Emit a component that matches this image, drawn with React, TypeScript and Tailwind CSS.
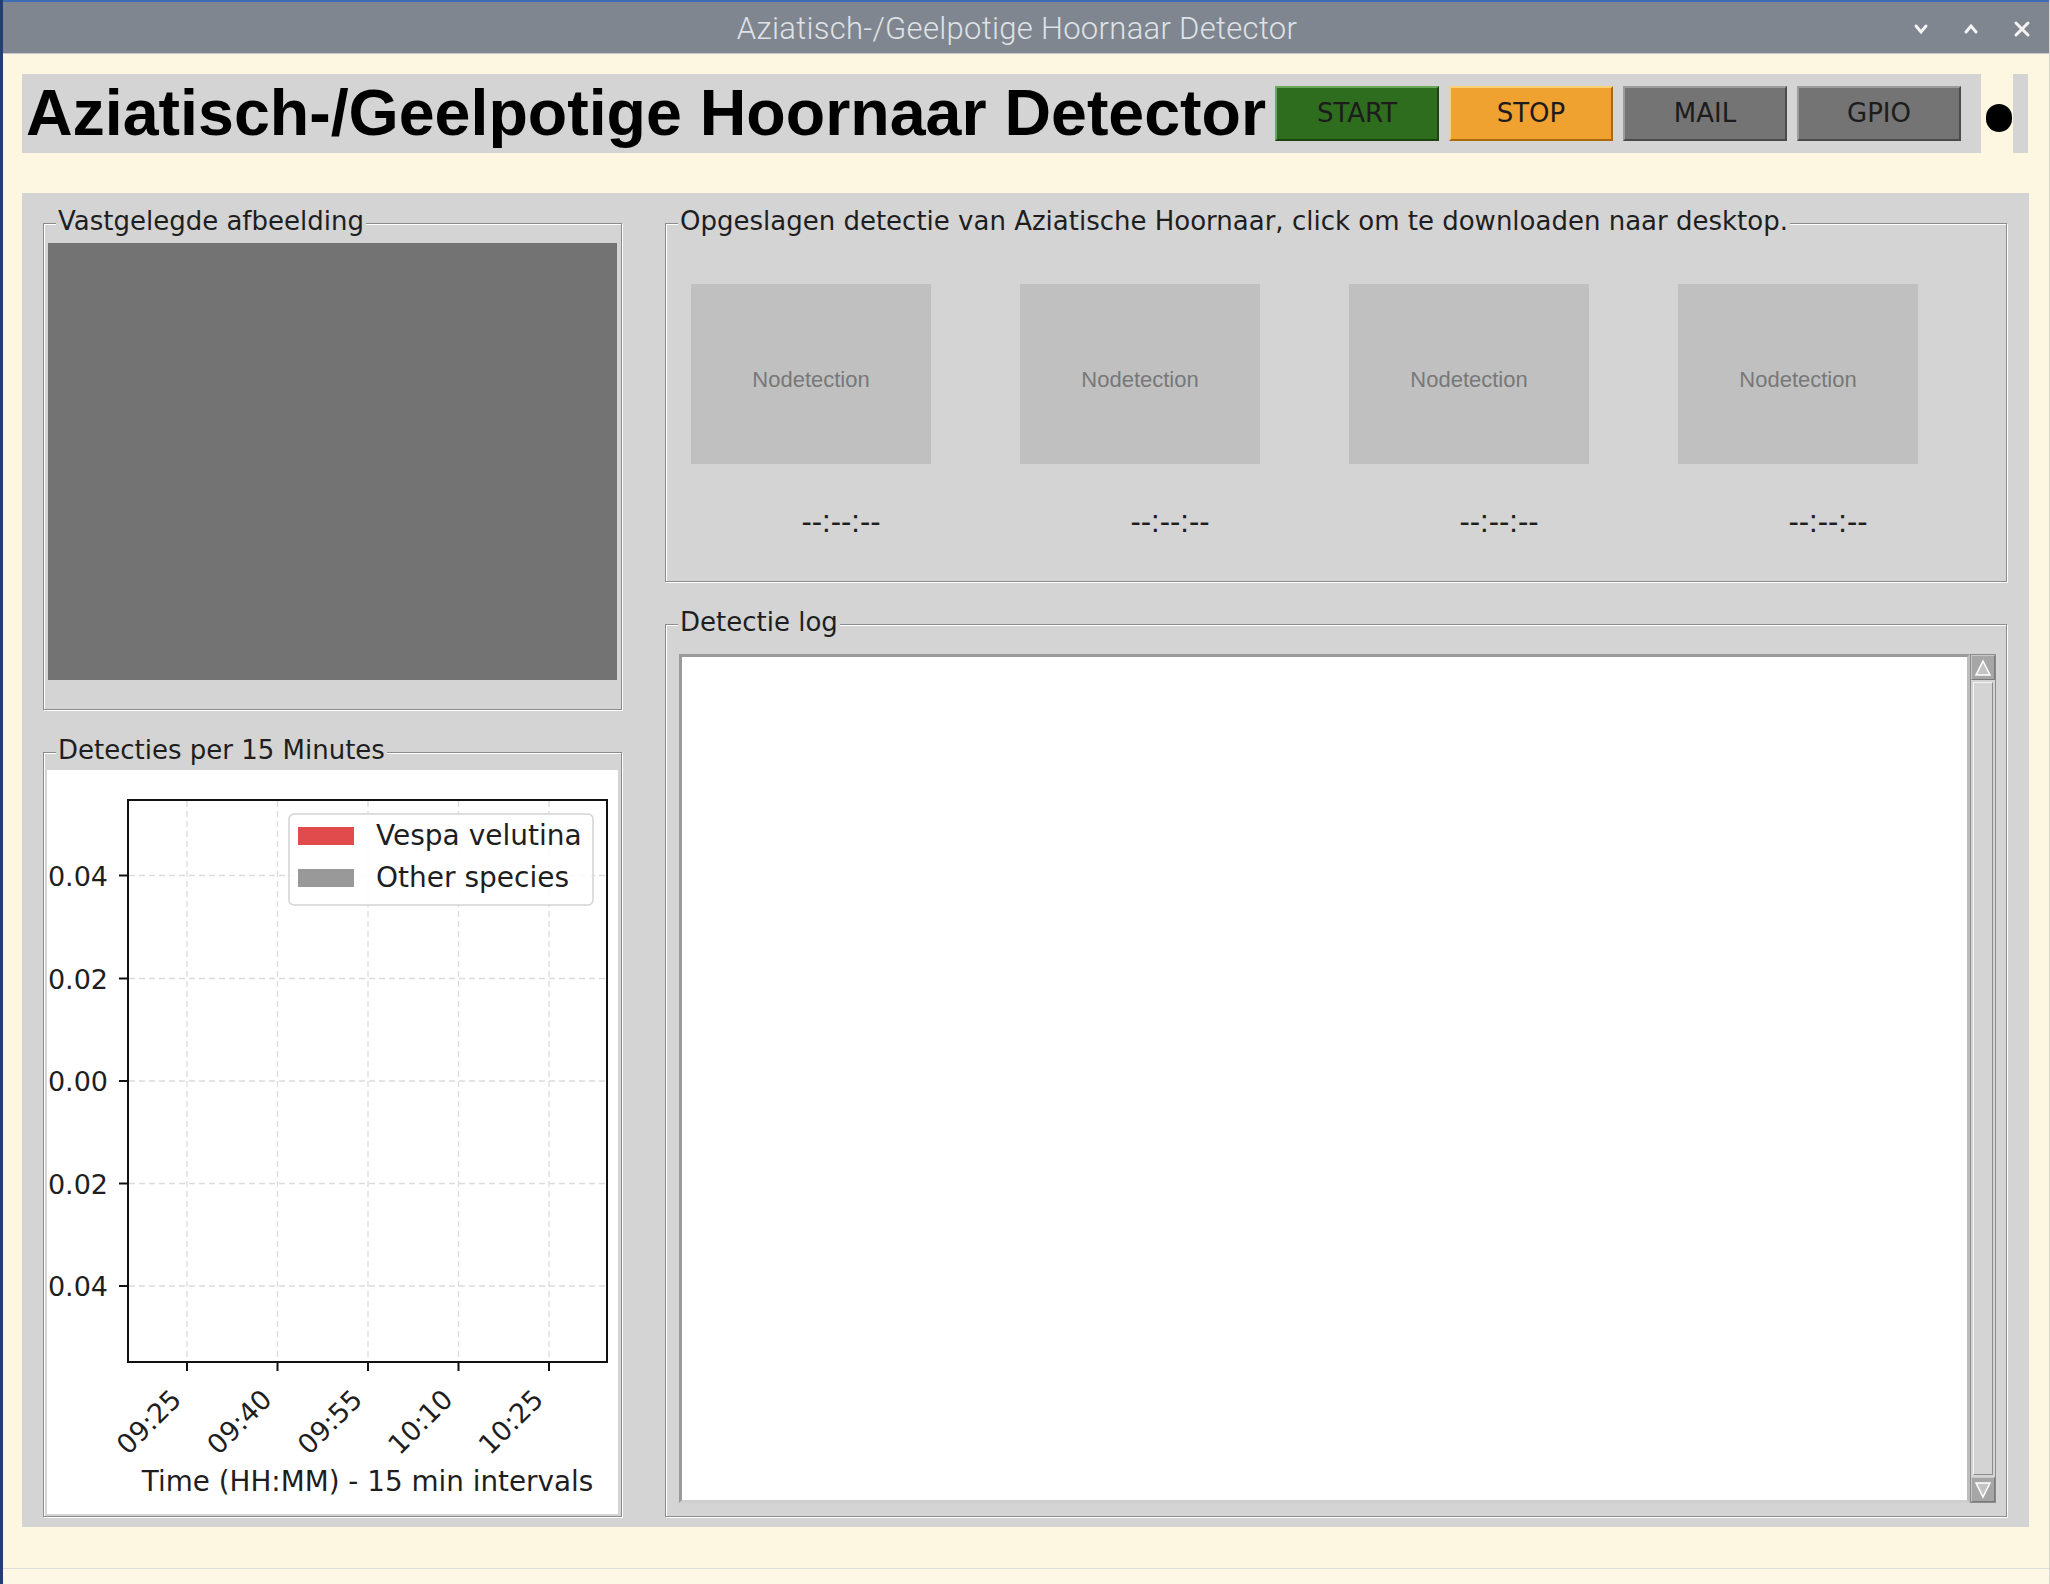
import React from 'react';

const yTicks = [
  { y: 105.5, label: '0.04' },
  { y: 208.5, label: '0.02' },
  { y: 311, label: '0.00' },
  { y: 413.5, label: '0.02' },
  { y: 516, label: '0.04' },
];

const xTicks = [
  { x: 140, label: '09:25' },
  { x: 230.5, label: '09:40' },
  { x: 321, label: '09:55' },
  { x: 411.5, label: '10:10' },
  { x: 502, label: '10:25' },
];

interface GroupProps {
  label: string;
  className?: string;
  children: React.ReactNode;
}

const Group = ({ label, className = '', children }: GroupProps) => (
  <fieldset className={`min-w-0 m-0 p-0 border border-[#8c8c8c] shadow-[inset_1px_1px_0_#ffffff,1px_1px_0_#ffffff] ${className}`}>
    <legend className="ml-[12px] px-[2px] pb-[5px] text-[26px] leading-[30px] text-[#1e1e1e] bg-[#d4d4d4]">{label}</legend>
    {children}
  </fieldset>
);

const Thumb = () => (
  <div className="w-[300px] flex flex-col">
    <div className="w-[240px] h-[180px] pt-[10px] bg-[#c0c0c0] flex items-center justify-center">
      <span className="font-['Liberation_Sans',Arial,sans-serif] text-[22px] text-[#787878]">Nodetection</span>
    </div>
    <div className="mt-[41px] h-[35px] flex items-center justify-center font-['Liberation_Sans',Arial,sans-serif] text-[31px] text-[#1e1e1e]">
      --:--:--
    </div>
  </div>
);

const Button = ({ label, className }: { label: string; className: string }) => (
  <button className={`w-[164px] h-[55px] border-2 flex items-center justify-center text-[26px] text-[#1c1c1c] ${className}`}>
    {label}
  </button>
);

const Chart = () => (
  <svg width="571" height="744" viewBox="0 0 571 744" className="block">
    <rect x="0" y="0" width="571" height="744" fill="#ffffff" />
    {xTicks.map((t) => (
      <line key={'gx' + t.x} x1={t.x} y1={31} x2={t.x} y2={591} stroke="#dcdcdc" strokeWidth="1.3" strokeDasharray="6 4" />
    ))}
    {yTicks.map((t) => (
      <line key={'gy' + t.y} x1={82} y1={t.y} x2={559} y2={t.y} stroke="#dcdcdc" strokeWidth="1.3" strokeDasharray="6 4" />
    ))}
    <rect x="81" y="30" width="479" height="562" fill="none" stroke="#111111" strokeWidth="2" />
    {yTicks.map((t) => (
      <g key={'ty' + t.y}>
        <line x1={72} y1={t.y} x2={81} y2={t.y} stroke="#111111" strokeWidth="2" />
        <text x={61} y={t.y + 10} textAnchor="end" fontFamily="DejaVu Sans, sans-serif" fontSize="27" fill="#1e1e1e">
          {t.label}
        </text>
      </g>
    ))}
    {xTicks.map((t) => (
      <g key={'tx' + t.x}>
        <line x1={t.x} y1={592} x2={t.x} y2={601} stroke="#111111" strokeWidth="2" />
        <text
          x={t.x - 4}
          y={631}
          textAnchor="end"
          transform={`rotate(-45 ${t.x - 4} 631)`}
          fontFamily="DejaVu Sans, sans-serif"
          fontSize="27"
          fill="#1e1e1e"
        >
          {t.label}
        </text>
      </g>
    ))}
    <text x={320.5} y={721} textAnchor="middle" fontFamily="DejaVu Sans, sans-serif" fontSize="27.8" fill="#1e1e1e">
      Time (HH:MM) - 15 min intervals
    </text>
    <rect x="242" y="44" width="304" height="91" rx="5" fill="#ffffff" fillOpacity="0.85" stroke="#d4d4d4" strokeWidth="1.5" />
    <rect x="251" y="57" width="56" height="18" fill="#e24b4b" />
    <rect x="251" y="99" width="56" height="18" fill="#999999" />
    <text x={329} y={75} fontFamily="DejaVu Sans, sans-serif" fontSize="28" fill="#1e1e1e">Vespa velutina</text>
    <text x={329} y={117} fontFamily="DejaVu Sans, sans-serif" fontSize="28" fill="#1e1e1e">Other species</text>
  </svg>
);

const ScrollArrow = ({ up }: { up: boolean }) => (
  <div className="h-[25px] bg-[#a6a6a6] border border-t-[#c8c8c8] border-l-[#c8c8c8] border-b-[#7a7a7a] border-r-[#7a7a7a] flex items-center justify-center">
    <svg width="18" height="18" viewBox="0 0 18 18">
      {up ? (
        <path d="M9 2 L16 16 L2 16 Z" fill="#c4c4c4" stroke="#ffffff" strokeWidth="1.5" />
      ) : (
        <path d="M2 2 L16 2 L9 16 Z" fill="#c4c4c4" stroke="#ffffff" strokeWidth="1.5" />
      )}
    </svg>
  </div>
);

export default function App() {
  return (
    <div className="w-[2050px] h-[1584px] flex flex-col bg-[#fdf6e1] border-l-[3px] border-l-[#233f70] border-r border-r-[#d6d6d6] overflow-hidden font-['DejaVu_Sans',sans-serif]">
      {/* window title bar */}
      <div className="h-[54px] shrink-0 flex items-center bg-[#80868f] border-t-2 border-t-[#3d6db5] border-b border-b-[#c9c9c9]">
        <div className="flex-1" />
        <span className="pt-[4px] font-['Roboto',sans-serif] font-light text-[31px] text-[#dfe2e6] tracking-[0.3px] whitespace-nowrap">
          Aziatisch-/Geelpotige Hoornaar Detector
        </span>
        <div className="flex-1 flex justify-end items-center gap-[34px] pr-[18px] pt-[2px]">
          <svg width="16" height="12" viewBox="0 0 16 12">
            <path d="M3 3 L8 9 L13 3" fill="none" stroke="#f4f4f4" strokeWidth="3" strokeLinecap="round" />
          </svg>
          <svg width="16" height="12" viewBox="0 0 16 12">
            <path d="M3 9 L8 3 L13 9" fill="none" stroke="#f4f4f4" strokeWidth="3" strokeLinecap="round" />
          </svg>
          <svg width="18" height="18" viewBox="0 0 18 18">
            <path d="M3 3 L15 15 M15 3 L3 15" fill="none" stroke="#f4f4f4" strokeWidth="3" strokeLinecap="round" />
          </svg>
        </div>
      </div>

      {/* header */}
      <div className="mt-[20px] ml-[19px] h-[79px] flex items-center shrink-0">
        <div className="w-[1959px] h-full bg-[#d4d4d4] flex items-center pl-[4px]">
          <h1 className="w-[1249px] whitespace-nowrap font-['Liberation_Sans',Arial,sans-serif] font-bold text-[64.5px] leading-none text-black">
            Aziatisch-/Geelpotige Hoornaar Detector
          </h1>
          <div className="flex gap-[10px]">
            <Button label="START" className="bg-[#2e6d1d] border-t-[#6aa85a] border-l-[#6aa85a] border-b-[#1b4410] border-r-[#1b4410]" />
            <Button label="STOP" className="bg-[#f0a231] border-t-[#f9cf78] border-l-[#f9cf78] border-b-[#a8690f] border-r-[#a8690f]" />
            <Button label="MAIL" className="bg-[#747474] border-t-[#9c9c9c] border-l-[#9c9c9c] border-b-[#4a4a4a] border-r-[#4a4a4a]" />
            <Button label="GPIO" className="bg-[#747474] border-t-[#9c9c9c] border-l-[#9c9c9c] border-b-[#4a4a4a] border-r-[#4a4a4a]" />
          </div>
        </div>
        <div className="w-[32px] flex justify-center pl-[4px] pt-[8px]">
          <div className="w-[26px] h-[28px] rounded-full bg-black" />
        </div>
        <div className="w-[15px] h-full bg-[#d4d4d4]" />
      </div>

      {/* main panel */}
      <div className="mt-[40px] ml-[19px] w-[2007px] h-[1334px] shrink-0 bg-[#d4d4d4] pt-[13px] pl-[21px] pr-[22px] pb-[10px] flex gap-[43px]">
        <div className="w-[579px] flex flex-col gap-[25px]">
          <Group label="Vastgelegde afbeelding">
            <div className="pt-[2px] px-[4px] pb-[3px]">
              <div className="h-[463px]">
                <div className="h-[437px] bg-[#737373]" />
              </div>
            </div>
          </Group>
          <Group label="Detecties per 15 Minutes">
            <div className="px-[3px] pb-[2px]">
              <Chart />
            </div>
          </Group>
        </div>

        <div className="w-[1342px] flex flex-col gap-[25px]">
          <Group label="Opgeslagen detectie van Aziatische Hoornaar, click om te downloaden naar desktop.">
            <div className="pt-[43px] pb-[41px] pl-[25px] flex gap-[29px]">
              <Thumb />
              <Thumb />
              <Thumb />
              <Thumb />
            </div>
          </Group>
          <Group label="Detectie log">
            <div className="pt-[12px] pl-[13px] pr-[10px] pb-[13px]">
              <div className="h-[849px] flex">
                <div className="flex-1 bg-white border-[3px] border-t-[#9a9a9a] border-l-[#9a9a9a] border-b-[#cfcfcf] border-r-[#bdbdbd]" />
                <div className="w-[26px] flex flex-col bg-[#d4d4d4] border border-[#8c8c8c]">
                  <ScrollArrow up />
                  <div className="flex-1 mx-[2px] my-[2px] border border-t-[#f4f4f4] border-l-[#f4f4f4] border-b-[#8c8c8c] border-r-[#8c8c8c]" />
                  <ScrollArrow up={false} />
                </div>
              </div>
            </div>
          </Group>
        </div>
      </div>

      {/* status strip */}
      <div className="mt-[41px] flex-1 border-t border-t-[#dcdcdc] bg-[#fdf7e6]" />
    </div>
  );
}
